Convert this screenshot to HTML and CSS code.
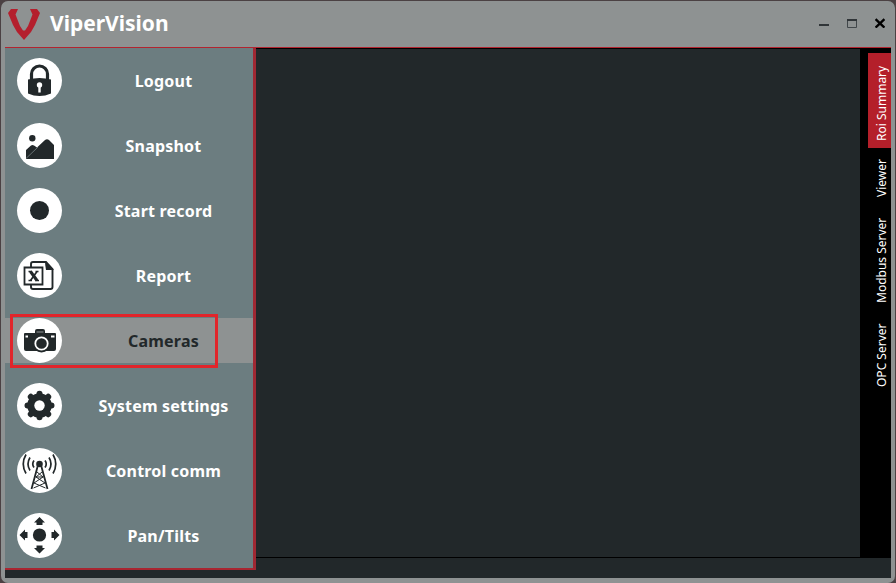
FILE: index.html
```html
<!DOCTYPE html>
<html lang="en">
<head>
<meta charset="utf-8">
<title>ViperVision</title>
<link rel="stylesheet" href="styles.css">
</head>
<body>
<div class="window">
  <header class="titlebar">
    <svg class="logo" viewBox="0 0 32 32"><path d="M3 1h7L7.500 6.500 12 18l3 4.500h2L20 18l4.500-11.500L22 1h7l3 4-5 12-4 7-7 8-7-8-4-7L0 5z"/></svg>
    <h1 class="title">ViperVision</h1>
    <div class="controls">
      <svg viewBox="0 0 10 10"><path d="M0 7h10" stroke="#303538" stroke-width="2"/></svg>
      <svg viewBox="0 0 10 10"><path d="M.5 1.500h9v8h-9z" fill="none" stroke="#41474a"/><path d="M0 1h10v2H0z" fill="#303538"/></svg>
      <svg viewBox="0 0 10 10"><path d="M.6 1.200l8.800 8.400M9.400 1.200L.6 9.600" stroke="#000" stroke-width="2.300"/></svg>
    </div>
  </header>
  <div class="body">
    <nav class="menu">
      <a class="item"><svg class="icon" viewBox="0 0 45 45"><path d="M14.500 22v-6a8 8 0 0 1 16 0v6" fill="none" stroke="#22282a" stroke-width="3.200"/><path d="M11 21.500q11.500-3 23 0v14q-11.500 5-23 0z"/><circle cx="22.500" cy="27" r="2.700" fill="#fff"/><path d="M21.300 28h2.400v6.500h-2.400z" fill="#fff"/></svg><span class="label">Logout</span></a>
      <a class="item"><svg class="icon" viewBox="0 0 45 45"><circle cx="15.300" cy="15.300" r="3.200"/><path d="M9 36v-9l5-4.500q1.500-1 3 0l3 2 8-7.500q2-1.500 4 0l5 5V36z"/><path d="M9 35.500L21 24" stroke="#859092" stroke-width=".7"/></svg><span class="label">Snapshot</span></a>
      <a class="item"><svg class="icon" viewBox="0 0 45 45"><circle cx="22.500" cy="22.500" r="9.500"/></svg><span class="label">Start record</span></a>
      <a class="item"><svg class="icon" viewBox="0 0 45 45"><path d="M14 14v-3q0-2 2-2h13l6.500 7v18q0 2-2 2H16q-2 0-2-2v-2" fill="none" stroke="#22282a" stroke-width="1.900"/><path d="M28 8l9 9h-8q-1-5-1-9z"/><path d="M7.500 14.500h18v17h-18z" fill="#fff" stroke="#22282a" stroke-width="1.800"/><path d="M13.500 18.500l6.500 9" stroke="#22282a" stroke-width="3"/><path d="M20 18.500l-6.500 9M11.500 18.500H15m3.500 0h3M11.500 27.500h3.500m3.500 0h3.500" fill="none" stroke="#22282a" stroke-width="1.700"/></svg><span class="label">Report</span></a>
      <a class="item active"><svg class="icon" viewBox="0 0 45 45"><path d="M7 16q0-1 1-1h10v-2q0-2 2-2h6q2 0 2 2v2h10q1 0 1 1v15q0 2-2 2H9q-2 0-2-2z"/><path d="M19.500 13h7v2h-7z" fill="#5b6062"/><path d="M8.500 17.500h2.500v2H8.500zM34 17.500h3.500v2H34z" fill="#fff"/><circle cx="24.500" cy="25.500" r="9"/><circle cx="24.500" cy="25.500" r="6.200" fill="none" stroke="#fff" stroke-width="1.800"/></svg><span class="label">Cameras</span></a>
      <a class="item"><svg class="icon" viewBox="0 0 45 45"><circle cx="22.500" cy="22.500" r="12.200"/><g stroke="#22282a" stroke-width="6" stroke-linecap="round"><path d="M22.500 10.800v23.400M10.500 22.500h24M13.800 13.800l17.400 17.400M31.200 13.800L13.800 31.200"/></g><circle cx="22.500" cy="22.500" r="5.200" fill="#fff"/></svg><span class="label">System settings</span></a>
      <a class="item"><svg class="icon" viewBox="0 0 45 45"><circle cx="22.500" cy="16" r="3.300"/><g fill="none" stroke="#22282a"><path d="M21 17l-6.500 24M24 17l6.500 24" stroke-width="1.800"/><path d="M20 24l6 5-9 6 11.500 5M25 24l-6 5 9 6-11.500 5M18.500 29h8" stroke-width="1"/><path d="M17 12.500q-2.500 3.500 0 7M28 12.500q2.500 3.500 0 7M13 9.500q-4 6.500 0 13M32 9.500q4 6.500 0 13M9 6.500q-5.500 9.500 0 19M36 6.500q5.500 9.500 0 19" stroke-width="1.700"/></g></svg><span class="label">Control comm</span></a>
      <a class="item"><svg class="icon" viewBox="0 0 45 45"><circle cx="22.500" cy="22" r="6.600"/><path d="M22.500 4l5.500 5.500h-2.500V12h-6V9.500H17zM22.500 40.500L28 35h-2.500v-2.500h-6V35H17zM2.500 22L8 16.500V19h2.500v6H8v2.500zM42.500 22L37 16.500V19h-2.500v6H37v2.500z"/></svg><span class="label">Pan/Tilts</span></a>
      <div class="highlight"></div>
    </nav>
    <div class="workspace">
      <main class="view"></main>
      <aside class="tabs">
        <a class="tab selected">Roi Summary</a>
        <a class="tab viewer">Viewer</a>
        <a class="tab modbus">Modbus Server</a>
        <a class="tab opc">OPC Server</a>
      </aside>
    </div>
  </div>
</div>
</body>
</html>
```
FILE: styles.css
```css
* { box-sizing: border-box; }
body { margin: 0; height: 583px; overflow: hidden; background: #4b4143; font-family: "Noto Sans", sans-serif; }
.window { width: 894px; height: 582px; margin: 1px 0 0 1px; padding: 0 4px 5px; background: #8e9292; border-radius: 7px; display: flex; flex-direction: column; }
.titlebar { height: 47px; flex: none; display: flex; align-items: flex-start; border-bottom: 1px solid #b3242f; }
.logo { width: 32px; height: 32px; margin: 7px 0 0 3px; fill: #b41f2d; }
.title { margin: 9px 0 0 10px; font-weight: bold; font-size: 21px; line-height: 26px; color: #fff; }
.controls { display: flex; gap: 18px; margin: 17px 6px 0 auto; }
.controls svg { width: 10px; height: 10px; }
.body { flex: 1; min-height: 0; display: flex; background: #22282a; }
.menu { position: relative; width: 251px; height: 522px; flex: none; padding-top: 10px; display: flex; flex-direction: column; gap: 20px; background: #6c7d80; border-right: 3px solid #9f2833; border-bottom: 2px solid #a82631; }
.item { height: 45px; flex: none; display: flex; align-items: center; padding-left: 12px; color: #fff; }
.active { background: #8e9292; color: #22282a; }
.icon { width: 45px; height: 45px; flex: none; border-radius: 50%; background: #fff; fill: #22282a; }
.label { width: 203px; flex: none; text-align: center; font-weight: bold; font-size: 16px; line-height: 20px; letter-spacing: .2px; white-space: nowrap; padding-top: 1px; }
.highlight { position: absolute; left: 5px; top: 266px; width: 208px; height: 54px; border: 3px solid #e1252b; }
.workspace { flex: 1; height: 510px; display: flex; border-top: 1px solid #000; border-bottom: 1px solid #000; }
.view { flex: 1; }
.tabs { width: 31px; padding-top: 4px; display: flex; flex-direction: column; align-items: flex-end; background: #000; }
.tab { width: 23px; writing-mode: vertical-rl; transform: rotate(180deg); padding-right: 5px; font-size: 12px; line-height: 18px; color: #fff; text-align: center; white-space: nowrap; }
.selected { height: 95px; background: #b41f2a; padding-bottom: 5px; }
.viewer { height: 60px; }
.modbus { height: 105px; }
.opc { height: 85px; }
```
